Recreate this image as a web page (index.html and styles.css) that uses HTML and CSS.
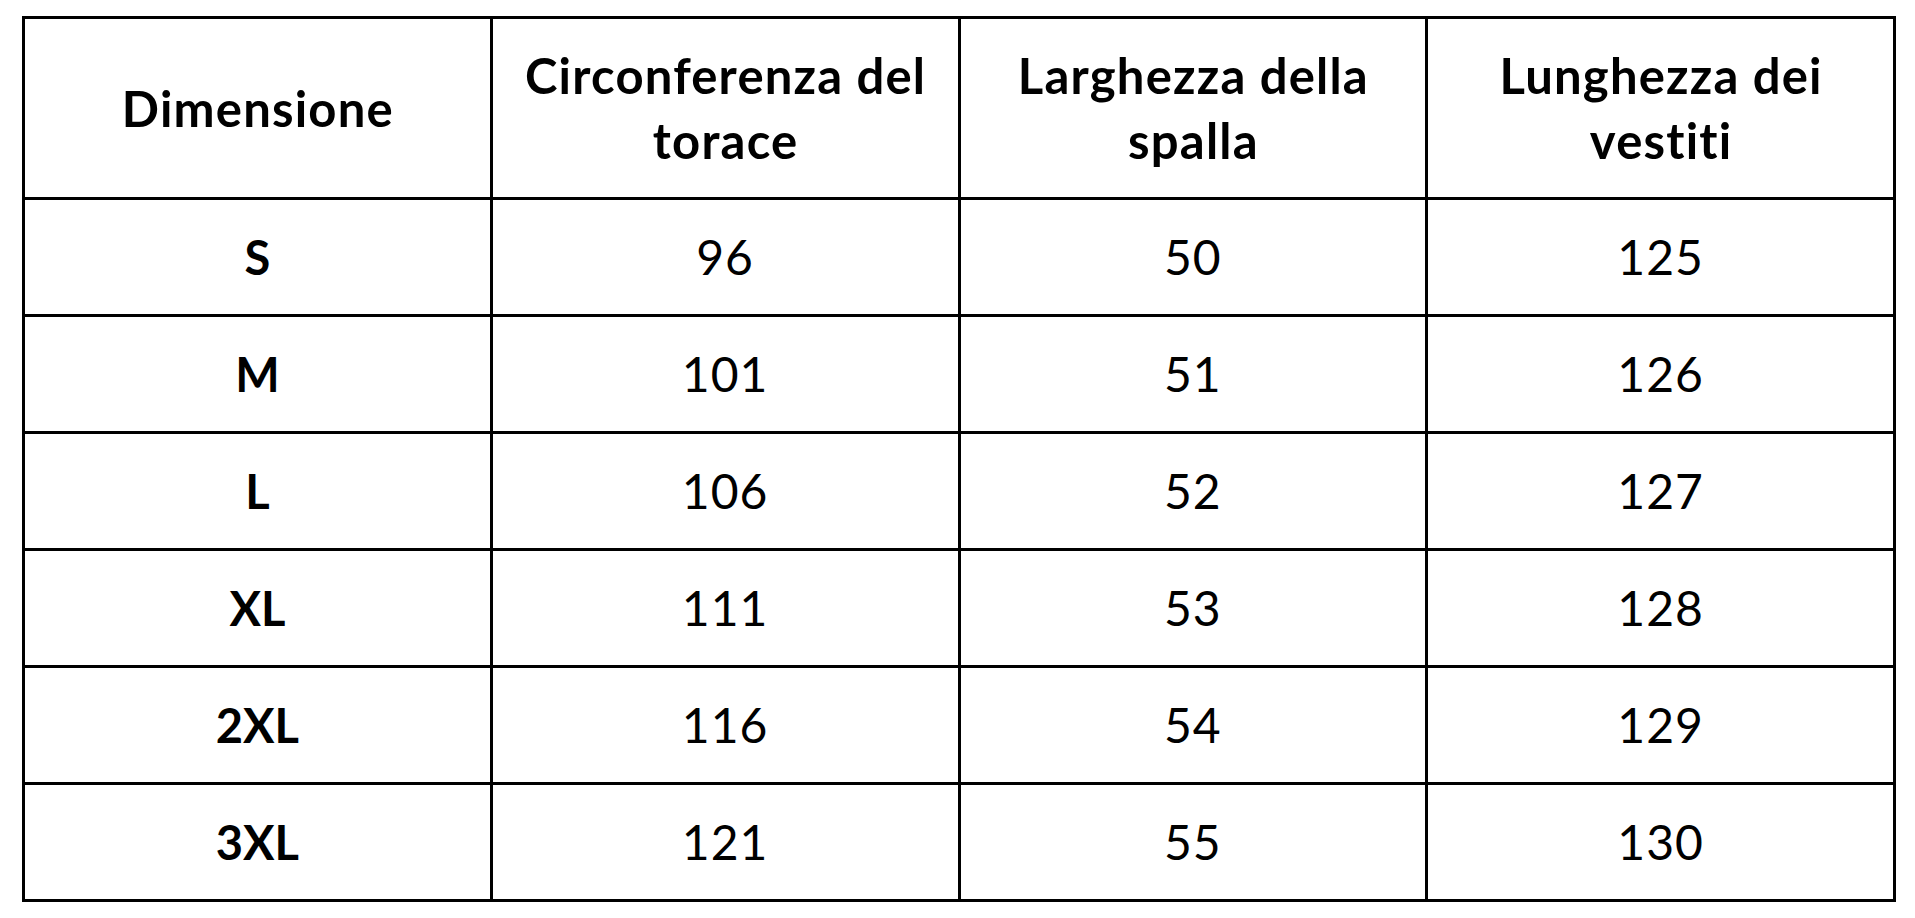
FILE: index.html
```html
<!DOCTYPE html>
<html lang="it">
<head>
<meta charset="utf-8">
<title>Tabella taglie</title>
<link rel="stylesheet" href="styles.css">
</head>
<body>
<table class="size-table">
  <thead>
    <tr>
      <th>Dimensione</th>
      <th>Circonferenza del<br>torace</th>
      <th>Larghezza della<br>spalla</th>
      <th>Lunghezza dei<br>vestiti</th>
    </tr>
  </thead>
  <tbody>
    <tr><th>S</th><td>96</td><td>50</td><td>125</td></tr>
    <tr><th>M</th><td>101</td><td>51</td><td>126</td></tr>
    <tr><th>L</th><td>106</td><td>52</td><td>127</td></tr>
    <tr><th>XL</th><td>111</td><td>53</td><td>128</td></tr>
    <tr><th>2XL</th><td>116</td><td>54</td><td>129</td></tr>
    <tr><th>3XL</th><td>121</td><td>55</td><td>130</td></tr>
  </tbody>
</table>
</body>
</html>
```
FILE: styles.css
```css
html, body {
  margin: 0;
  padding: 0;
  background: #ffffff;
}
body {
  padding: 16px 0 0 22px;
  font-family: Lato, "Liberation Sans", sans-serif;
  color: #000;
  font-variant-ligatures: none;
}
.size-table {
  border-collapse: separate;
  border-spacing: 0;
  table-layout: fixed;
  border-top: 3px solid #000;
  border-left: 3px solid #000;
  width: 1874px;
}
.size-table th,
.size-table td {
  border-right: 3px solid #000;
  border-bottom: 3px solid #000;
  padding: 0;
  text-align: center;
  vertical-align: middle;
  width: 465px;
  box-sizing: border-box;
}
.size-table thead th {
  height: 181px;
  font-size: 49px;
  font-weight: 700;
  line-height: 65px;
  letter-spacing: 1.2px;
  padding-left: 1px;
}
.size-table tbody th,
.size-table tbody td {
  height: 117px;
  line-height: 1;
}
.size-table tbody th {
  font-size: 47px;
  font-weight: 700;
}
.size-table tbody td {
  font-size: 48px;
  font-weight: 400;
  letter-spacing: 1px;
}
```
